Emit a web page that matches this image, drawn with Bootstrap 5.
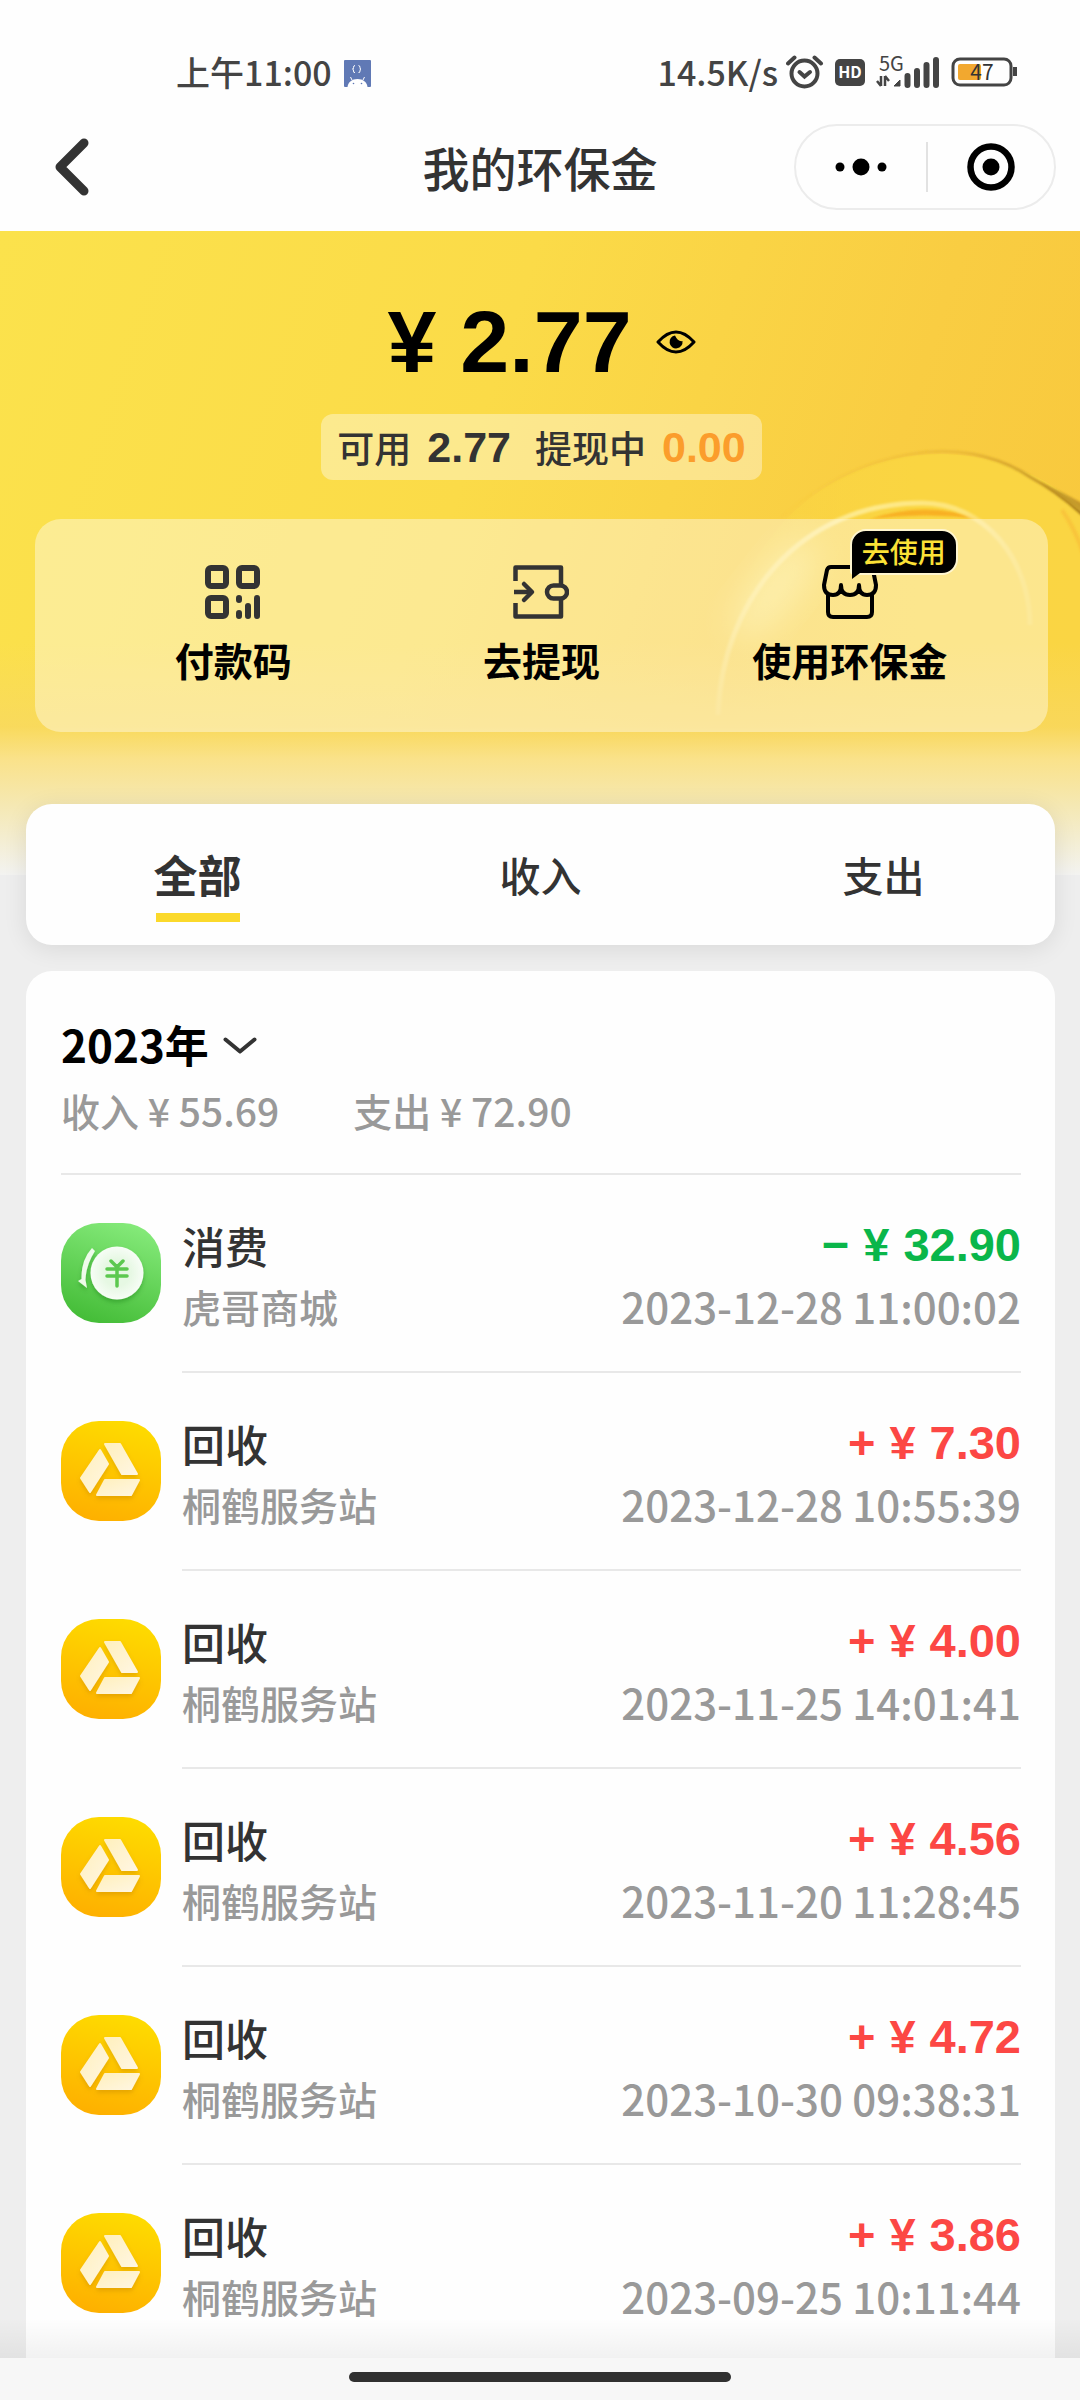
<!DOCTYPE html>
<html lang="zh-CN">
<head>
<meta charset="utf-8">
<meta name="viewport" content="width=device-width, initial-scale=1">
<title>我的环保金</title>
<link href="https://cdn.jsdelivr.net/npm/bootstrap@5.3.0/dist/css/bootstrap.min.css" rel="stylesheet">
<style>
  body { font-family: "Noto Sans CJK SC", sans-serif; font-weight: 500; color: #333; background: #eee; }
  svg { display: block; flex: none; }
  .screen { height: 100vh; overflow: hidden; }

  /* system status bar */
  .status-bar { height: 96px; padding: 44px 62px 0 176px; font-size: 34px; line-height: 56px; color: #444; background: #fefefe; }
  .status-bar svg text { font-family: "Noto Sans CJK SC", sans-serif; }
  .clock { gap: 12px; }

  /* title bar */
  .title-bar { height: 135px; padding: 8px 24px 0; background: #fefefe; display: grid; grid-template-columns: minmax(0, 1fr) auto minmax(0, 1fr); align-items: center; }
  .title-bar h1 { font-size: 47px; line-height: 56px; font-weight: 500; color: #333; }
  .plain-btn { border: 0; background: none; padding: 0; color: inherit; }
  .back-btn { padding-left: 26px; justify-self: start; }
  .capsule { width: 262px; height: 86px; border: 2px solid #ececec; border-radius: 43px; justify-self: end; }
  .capsule .split { width: 2px; height: 50px; background: #e2e2e2; }

  /* yellow header */
  .hero { position: relative; padding: 55px 32px 143px 35px; background: linear-gradient(108deg, #fbe24c 0%, #fbdb48 42%, #f9cd42 75%, #f8c73b 100%); }
  .hero-art { position: absolute; right: 0; top: 0; }
  .hero-fade { position: absolute; inset: 0; background: linear-gradient(to bottom, rgba(248,214,90,0) 64%, rgba(248,216,98,.75) 77%, #fae28a 82%, #f5e8b2 89%, #f3f3f1 100%); }
  .hero-body { position: relative; }
  .money { font-family: "Liberation Sans", sans-serif; font-weight: 700; }
  .balance { font-size: 88px; line-height: 112px; color: #000; }
  .pill { height: 66px; padding: 0 16px; border-radius: 12px; background: rgba(255,255,255,.38); font-size: 37px; line-height: 60px; }
  .pill b { font-size: 43px; }
  .pill .pending { color: #fb9d2c; }
  .actions { margin-top: 39px; height: 213px; padding: 46px 44px 0; border-radius: 26px; background: rgba(255,255,255,.4); }
  .action { color: #000; text-decoration: none; font-size: 39px; line-height: 56px; font-weight: 700; }
  .action svg { margin-bottom: 12px; }
  .icon-slot { position: relative; }
  .bubble { position: absolute; left: 28px; bottom: 56px; width: 108px; height: 46px; border: 2px solid #fff6d0; border-radius: 16px 16px 16px 4px; background: #000; color: #fbe136; font-size: 28px; line-height: 40px; font-weight: 500; text-align: center; white-space: nowrap; }
  .bubble::after { content: ""; position: absolute; left: 0; top: 36px; border-top: 12px solid #000; border-right: 16px solid transparent; }

  /* cards */
  .sheet { margin: 0 25px 0 26px; background: #fefefe; border-radius: 26px; }
  .tabs-sheet { position: relative; margin-top: -71px; height: 142px; box-shadow: 0 4px 24px rgba(0,0,0,.09); }
  .tabs-sheet .tab { flex: 1 1 0; font-size: 41px; font-weight: 500; color: #333; display: flex; flex-direction: column; align-items: center; padding-top: 42px; line-height: 56px; }
  .tabs-sheet .tab.active { font-size: 44px; font-weight: 700; }
  .tabs-sheet .tab.active::after { content: ""; width: 84px; height: 9px; margin-top: 11px; background: #fbd92b; }
  .bill-sheet { margin-top: 26px; border-radius: 26px 26px 0 0; padding: 45px 34px 0 35px; overflow: hidden; }
  .year-btn { font-size: 44px; line-height: 56px; font-weight: 700; color: #000; gap: 14px; }
  .year-btn svg { margin-top: 4px; }
  .totals { margin-top: 8px; font-size: 39px; line-height: 60px; color: #999; padding-bottom: 33px; border-bottom: 2px solid #e8e8e8; gap: 74px; }

  .bill-list { padding: 0; margin: 0; list-style: none; }
  .bill { display: flex; gap: 21px; }
  .bill > svg { margin-top: 48px; }
  .bill-body { flex: 1; height: 198px; padding-top: 46px; border-bottom: 2px solid #e8e8e8; }
  .bill-name { font-size: 43px; line-height: 48px; }
  .bill-amount { font-size: 47px; line-height: 48px; color: #fc4744; gap: 14px; }
  .bill-amount.spend { color: #0ab64a; }
  .bill-meta { margin-top: 12px; font-size: 39px; line-height: 50px; color: #999; }
  .bill-meta time { font-size: 42px; }

  /* gesture area */
  .gesture { position: relative; height: 42px; background: #f7f7f7; }
  .gesture::before { content: ""; position: absolute; left: 0; right: 0; bottom: 100%; height: 40px; background: linear-gradient(to bottom, rgba(0,0,0,0), rgba(0,0,0,.05)); }
  .gesture span { width: 382px; height: 10px; margin-top: 14px; border-radius: 5px; background: #303030; }
</style>
<script src="https://cdn.jsdelivr.net/npm/bootstrap@5.3.0/dist/js/bootstrap.bundle.min.js" defer></script>
</head>
<body>

<svg width="0" height="0" class="position-absolute" aria-hidden="true">
  <defs>
    <linearGradient id="gold" x1=".6" y1="0" x2=".35" y2="1"><stop offset="0" stop-color="#fedb00"/><stop offset="1" stop-color="#feb000"/></linearGradient>
    <linearGradient id="leaf" x1=".7" y1="0" x2=".35" y2="1"><stop offset="0" stop-color="#85ea7a"/><stop offset="1" stop-color="#45bd38"/></linearGradient>
    <linearGradient id="cream" x1="0" y1="0" x2="1" y2="1"><stop offset="0" stop-color="#fff0bd"/><stop offset="1" stop-color="#fff6e2"/></linearGradient>
    <radialGradient id="coin"><stop offset=".5" stop-color="#e6f8e3"/><stop offset="1" stop-color="#f7fdf6"/></radialGradient>
    <filter id="soft" x="-30%" y="-30%" width="160%" height="160%"><feDropShadow dx="0" dy="3" stdDeviation="2" flood-color="#a06000" flood-opacity=".25"/></filter>
    <filter id="softg" x="-30%" y="-30%" width="160%" height="160%"><feDropShadow dx="0" dy="3" stdDeviation="2" flood-color="#106010" flood-opacity=".3"/></filter>
  </defs>
  <symbol id="recycle" viewBox="0 0 100 100">
    <rect width="100" height="100" rx="38" fill="url(#gold)"/>
    <g filter="url(#soft)" fill="url(#cream)" stroke="url(#cream)" stroke-width="2" stroke-linejoin="round">
      <path d="M44 23H59L76 53H61Z"/><path d="M39 29L47 43L29 71L20 57Z"/><path d="M44 59H78L70 74H36Z"/>
    </g>
  </symbol>
  <symbol id="spend" viewBox="0 0 100 100">
    <rect width="100" height="100" rx="38" fill="url(#leaf)"/>
    <g filter="url(#softg)">
      <circle cx="56" cy="50" r="26.500" fill="url(#coin)"/>
      <path d="M31 25L34 28Q25 42 24.500 57L26 65L17 58L20.500 56Q20 37 31 25Z" fill="#eefbea"/>
    </g>
    <path d="M50 38L56 44L62 38M56 44V63M46 46H66M46 53H66" fill="none" stroke="#5cc84f" stroke-width="3.500" stroke-linecap="round"/>
  </symbol>
</svg>

<div class="screen d-flex flex-column">
  <div class="status-bar d-flex align-items-start justify-content-between">
    <div class="clock d-flex">
      <span>上午11:00</span>
      <svg class="mt-3" width="27" height="27" viewBox="0 0 27 27"><rect width="27" height="27" rx="1" fill="#6079b5"/><path d="M3.500 27C4 22 8 19 13.500 19S23 22 23.500 27Z" fill="#fff"/><path d="M8 20L6.500 17M19 20L20.500 17M11 5.500Q9.500 5.500 9.500 7.500T8.500 9Q9.500 9 9.500 11T11 12.500M14.500 5.500Q16 5.500 16 7.500T17 9Q16 9 16 11T14.500 12.500" stroke="#fff" stroke-width="1" fill="none"/><circle cx="9.500" cy="23.500" r=".8" fill="#6079b5"/><circle cx="17.500" cy="23.500" r=".8" fill="#6079b5"/></svg>
    </div>
    <div class="d-flex">
      <span class="me-2">14.5K/s</span>
      <svg width="232" height="48" viewBox="0 -8 232 48">
        <g fill="none" stroke="#444" stroke-width="4" stroke-linecap="round"><circle cx="18.500" cy="21.500" r="13"/><path d="M13.500 20L18.500 24.500L24 20"/><path d="M2 11.500L8.500 5.500M35 11.500L28.500 5.500"/></g>
        <rect x="49" y="7" width="30" height="27" rx="5" fill="#444"/><text x="64" y="26" font-size="16" font-weight="700" fill="#fff" text-anchor="middle">HD</text>
        <text x="93" y="19" font-size="20" font-weight="400" fill="#444">5G</text>
        <path d="M95 24V34M95 34L91 29M99 34V24M99 24L103 29" stroke="#444" stroke-width="2.500" fill="none"/>
        <path d="M108 34L114 28V34Z" fill="#444" stroke="#444" stroke-width="1"/>
        <path d="M121.500 24V33M131 19V33M140.500 13V33M150 8V33" stroke="#444" stroke-width="6" stroke-linecap="round"/>
        <rect x="167" y="7" width="58" height="26" rx="7" fill="none" stroke="#444" stroke-width="3"/>
        <rect x="172" y="12" width="23" height="16" rx="2" fill="#f2a82f"/>
        <path d="M229 15V24" stroke="#444" stroke-width="4"/>
        <text x="196" y="28" font-size="21" font-weight="400" fill="#333" text-anchor="middle">47</text>
      </svg>
    </div>
  </div>

  <header class="title-bar">
    <button class="plain-btn back-btn" type="button" aria-label="返回">
      <svg width="44" height="62" viewBox="0 0 44 62"><path d="M34 7L10 31L34 55" fill="none" stroke="#333" stroke-width="9" stroke-linecap="round" stroke-linejoin="round"/></svg>
    </button>
    <h1 class="m-0">我的环保金</h1>
    <div class="capsule d-flex align-items-center">
      <button class="plain-btn flex-fill d-flex justify-content-center" type="button" aria-label="更多">
        <svg width="52" height="18" viewBox="0 0 52 18"><circle cx="5" cy="9" r="4.500"/><circle cx="26" cy="9" r="8.500"/><circle cx="47" cy="9" r="4.500"/></svg>
      </button>
      <span class="split"></span>
      <button class="plain-btn flex-fill d-flex justify-content-center" type="button" aria-label="关闭">
        <svg width="48" height="48" viewBox="0 0 48 48"><circle cx="24" cy="24" r="20.500" fill="none" stroke="#000" stroke-width="6.500"/><circle cx="24" cy="24" r="8.500"/></svg>
      </button>
    </div>
  </header>

  <section class="hero">
    <svg class="hero-art" width="420" height="644" viewBox="660 231 420 644" aria-hidden="true">
      <defs>
        <linearGradient id="ball" x1="0" y1="0" x2="1" y2="0"><stop offset="0" stop-color="#fbdc45" stop-opacity="0"/><stop offset=".45" stop-color="#fad541"/><stop offset="1" stop-color="#fad544"/></linearGradient>
        <linearGradient id="rim" gradientUnits="userSpaceOnUse" x1="780" y1="0" x2="1080" y2="0"><stop offset="0" stop-color="#e8b030" stop-opacity="0"/><stop offset=".6" stop-color="#dca52c" stop-opacity=".45"/><stop offset="1" stop-color="#a87c1c"/></linearGradient>
        <linearGradient id="halo" gradientUnits="userSpaceOnUse" x1="718" y1="0" x2="1030" y2="0"><stop offset="0" stop-color="#fff0a8" stop-opacity=".35"/><stop offset=".45" stop-color="#fff0a0" stop-opacity=".8"/><stop offset=".8" stop-color="#ffeb90" stop-opacity=".7"/><stop offset="1" stop-color="#ffeb90" stop-opacity=".25"/></linearGradient>
        <filter id="blur1" x="-10%" y="-10%" width="120%" height="120%"><feGaussianBlur stdDeviation="1.200"/></filter>
        <filter id="blur2" x="-50%" y="-50%" width="200%" height="200%"><feGaussianBlur stdDeviation="16"/></filter>
      </defs>
      <circle cx="940" cy="668" r="214" fill="url(#ball)"/>
      <path d="M780 518C860 450 960 430 1030 477Q1058 492 1084 516" fill="none" stroke="url(#rim)" stroke-width="3" filter="url(#blur1)"/>
      <path d="M1040 482Q1062 492 1084 504V514Q1062 496 1040 482Z" fill="#b08420" opacity=".7" filter="url(#blur1)"/>
      <path d="M1062 510Q1076 530 1084 556" stroke="#f5a52c" stroke-opacity=".35" stroke-width="4" fill="none" filter="url(#blur1)"/>
      <ellipse cx="775" cy="590" rx="22" ry="60" transform="rotate(38 775 590)" fill="#fff3a0" opacity=".5" filter="url(#blur2)"/>
      <path d="M870 519Q925 500 980 519Q925 512 870 519Z" fill="#f8a81c" opacity=".8" filter="url(#blur1)"/>
      <path d="M718 715C722 600 800 503 922 503C985 503 1030 560 1030 625" fill="none" stroke="url(#halo)" stroke-width="5" filter="url(#blur1)"/>
    </svg>
    <div class="hero-fade"></div>
    <div class="hero-body">
      <div class="balance money d-flex align-items-center justify-content-center">
        <span class="me-4">¥</span><span class="me-4">2.77</span>
        <button class="plain-btn" type="button" aria-label="隐藏金额">
          <svg width="40" height="24" viewBox="0 0 40 24"><path d="M2 12Q20 -8 38 12Q20 32 2 12Z" fill="none" stroke="#000" stroke-width="3" stroke-linejoin="round"/><path d="M19 5.500A6.500 6.500 0 1 0 26.500 11Q22 12 19 5.500Z"/></svg>
        </button>
      </div>
      <div class="d-flex justify-content-center mt-3">
        <div class="pill d-flex align-items-center">
          <span class="me-3">可用</span><b class="money me-4">2.77</b><span class="me-3">提现中</span><b class="money pending">0.00</b>
        </div>
      </div>
      <nav class="actions">
        <div class="row g-0 text-center">
          <a class="action col-4 d-flex flex-column align-items-center" href="#">
            <svg width="56" height="54" viewBox="0 0 56 54"><g fill="none" stroke="#333" stroke-width="6"><rect x="3" y="3" width="18" height="18" rx="3"/><rect x="34" y="3" width="18" height="18" rx="3"/><rect x="3" y="33" width="18" height="18" rx="3"/><g stroke-linecap="round"><path d="M34 33V35M34 48V51M43 41V51M52 33V51"/></g></g></svg>
            付款码
          </a>
          <a class="action col-4 d-flex flex-column align-items-center" href="#">
            <svg width="56" height="54" viewBox="0 0 56 54"><g fill="none" stroke="#333" stroke-width="4.500" stroke-linejoin="round"><path d="M2.500 16V2.500H48V20M2.500 38V51.500H48V34"/><rect x="34" y="20.500" width="20" height="13" rx="6.500"/><path d="M1 27H18" /><path d="M11 19L19 27L11 35" stroke-linecap="round"/></g></svg>
            去提现
          </a>
          <a class="action col-4 d-flex flex-column align-items-center" href="#">
            <span class="icon-slot">
              <svg width="56" height="54" viewBox="0 0 56 54"><g fill="none" stroke="#000" stroke-width="4" stroke-linejoin="round" stroke-linecap="round"><path d="M9 2H47Q50 2 51 5L54 20Q54 30 45 30Q37 30 37 20Q37 30 28 30T19 20Q19 30 11 30Q2 30 2 20L5 5Q6 2 9 2Z"/><path d="M6 30V47Q6 52 11 52H45Q50 52 50 47V30"/></g></svg>
              <span class="bubble">去使用</span>
            </span>
            使用环保金
          </a>
        </div>
      </nav>
    </div>
  </section>

  <div class="sheet tabs-sheet d-flex" role="tablist">
    <button class="plain-btn tab active" type="button" role="tab" aria-selected="true">全部</button>
    <button class="plain-btn tab" type="button" role="tab" aria-selected="false">收入</button>
    <button class="plain-btn tab" type="button" role="tab" aria-selected="false">支出</button>
  </div>

  <main class="sheet bill-sheet flex-fill">
    <button class="plain-btn year-btn d-flex align-items-center" type="button">2023年
      <svg width="34" height="18" viewBox="0 0 34 18"><path d="M2.500 2.500L17 14.500L31.500 2.500" fill="none" stroke="#333" stroke-width="4" stroke-linecap="round" stroke-linejoin="round"/></svg>
    </button>
    <div class="totals d-flex"><span>收入 ¥ 55.69</span><span>支出 ¥ 72.90</span></div>

    <ul class="bill-list">
      <li class="bill">
        <svg width="100" height="100"><use href="#spend"/></svg>
        <div class="bill-body">
          <div class="d-flex justify-content-between"><span class="bill-name">消费</span><span class="bill-amount money spend d-flex"><span>−</span><span>¥</span><span>32.90</span></span></div>
          <div class="bill-meta d-flex justify-content-between"><span>虎哥商城</span><time>2023-12-28 11:00:02</time></div>
        </div>
      </li>
      <li class="bill">
        <svg width="100" height="100"><use href="#recycle"/></svg>
        <div class="bill-body">
          <div class="d-flex justify-content-between"><span class="bill-name">回收</span><span class="bill-amount money d-flex"><span>+</span><span>¥</span><span>7.30</span></span></div>
          <div class="bill-meta d-flex justify-content-between"><span>桐鹤服务站</span><time>2023-12-28 10:55:39</time></div>
        </div>
      </li>
      <li class="bill">
        <svg width="100" height="100"><use href="#recycle"/></svg>
        <div class="bill-body">
          <div class="d-flex justify-content-between"><span class="bill-name">回收</span><span class="bill-amount money d-flex"><span>+</span><span>¥</span><span>4.00</span></span></div>
          <div class="bill-meta d-flex justify-content-between"><span>桐鹤服务站</span><time>2023-11-25 14:01:41</time></div>
        </div>
      </li>
      <li class="bill">
        <svg width="100" height="100"><use href="#recycle"/></svg>
        <div class="bill-body">
          <div class="d-flex justify-content-between"><span class="bill-name">回收</span><span class="bill-amount money d-flex"><span>+</span><span>¥</span><span>4.56</span></span></div>
          <div class="bill-meta d-flex justify-content-between"><span>桐鹤服务站</span><time>2023-11-20 11:28:45</time></div>
        </div>
      </li>
      <li class="bill">
        <svg width="100" height="100"><use href="#recycle"/></svg>
        <div class="bill-body">
          <div class="d-flex justify-content-between"><span class="bill-name">回收</span><span class="bill-amount money d-flex"><span>+</span><span>¥</span><span>4.72</span></span></div>
          <div class="bill-meta d-flex justify-content-between"><span>桐鹤服务站</span><time>2023-10-30 09:38:31</time></div>
        </div>
      </li>
      <li class="bill">
        <svg width="100" height="100"><use href="#recycle"/></svg>
        <div class="bill-body border-0">
          <div class="d-flex justify-content-between"><span class="bill-name">回收</span><span class="bill-amount money d-flex"><span>+</span><span>¥</span><span>3.86</span></span></div>
          <div class="bill-meta d-flex justify-content-between"><span>桐鹤服务站</span><time>2023-09-25 10:11:44</time></div>
        </div>
      </li>
    </ul>
  </main>

  <footer class="gesture d-flex justify-content-center align-items-start"><span></span></footer>
</div>
</body>
</html>
